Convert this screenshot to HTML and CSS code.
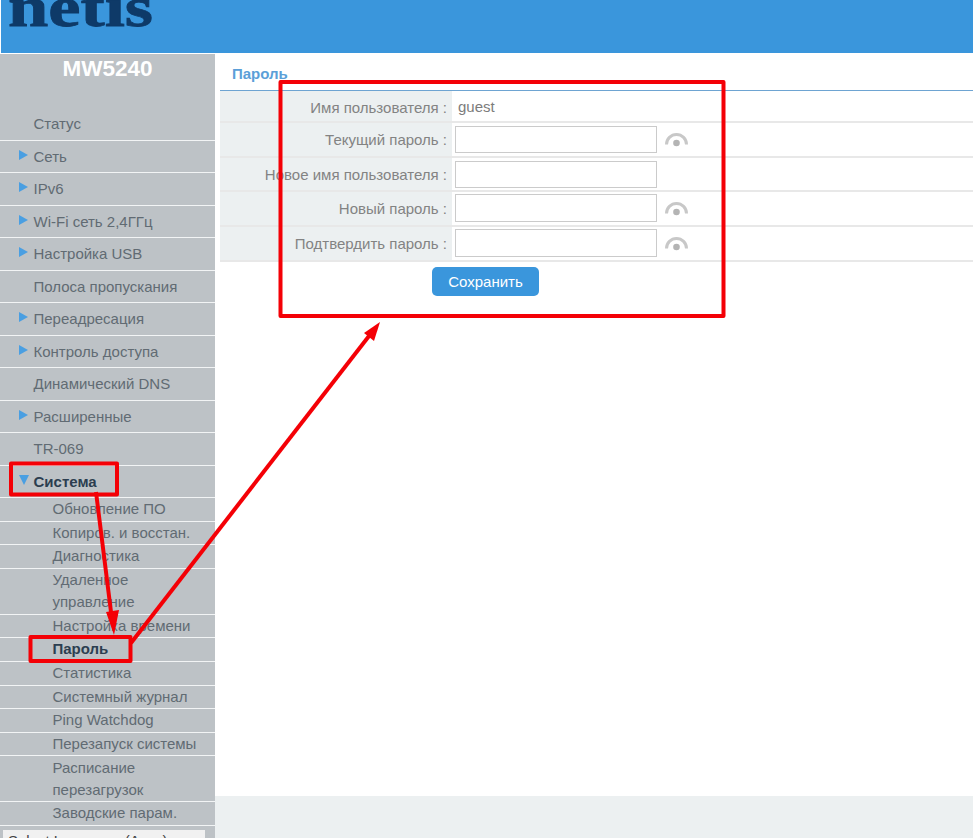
FILE: index.html
```html
<!DOCTYPE html>
<html lang="ru">
<head>
<meta charset="utf-8">
<title>netis MW5240</title>
<link rel="stylesheet" href="styles.css">
</head>
<body>
<div class="page">
  <header class="top"><span class="logo">netis</span></header>
  <div class="body">
    <nav class="side">
      <div class="model">MW5240</div>
      <div class="item">Статус</div>
      <div class="item arrow">Сеть</div>
      <div class="item arrow">IPv6</div>
      <div class="item arrow">Wi-Fi сеть 2,4ГГц</div>
      <div class="item arrow">Настройка USB</div>
      <div class="item">Полоса пропускания</div>
      <div class="item arrow">Переадресация</div>
      <div class="item arrow">Контроль доступа</div>
      <div class="item">Динамический DNS</div>
      <div class="item arrow">Расширенные</div>
      <div class="item">TR-069</div>
      <div class="item arrow open">Система</div>
      <div class="sub">Обновление ПО</div>
      <div class="sub">Копиров. и восстан.</div>
      <div class="sub">Диагностика</div>
      <div class="sub double">Удаленное управление</div>
      <div class="sub">Настройка времени</div>
      <div class="sub current">Пароль</div>
      <div class="sub">Статистика</div>
      <div class="sub">Системный журнал</div>
      <div class="sub">Ping Watchdog</div>
      <div class="sub">Перезапуск системы</div>
      <div class="sub double">Расписание перезагрузок</div>
      <div class="sub">Заводские парам.</div>
      <div class="lang">Select Language (Авто)</div>
    </nav>
    <main class="main">
      <section class="content">
        <h1 class="title">Пароль</h1>
        <div class="form">
          <div class="row r1"><div class="label">Имя пользователя :</div><div class="value">guest</div></div>
          <div class="row r2"><div class="label">Текущий пароль :</div><div class="value"><input class="field" type="text"><svg class="eye" viewBox="0 0 23 16"><path d="M1.500 13.500a10 10 0 0 1 20 0" fill="none" stroke="#c8c8c8" stroke-width="3"/><circle cx="11.500" cy="12" r="3.300" fill="#b4b4b4"/></svg></div></div>
          <div class="row r2"><div class="label">Новое имя пользователя :</div><div class="value"><input class="field" type="text"></div></div>
          <div class="row r3"><div class="label">Новый пароль :</div><div class="value"><input class="field tall" type="text"><svg class="eye" viewBox="0 0 23 16"><path d="M1.500 13.500a10 10 0 0 1 20 0" fill="none" stroke="#c8c8c8" stroke-width="3"/><circle cx="11.500" cy="12" r="3.300" fill="#b4b4b4"/></svg></div></div>
          <div class="row r3"><div class="label">Подтвердить пароль :</div><div class="value"><input class="field tall" type="text"><svg class="eye" viewBox="0 0 23 16"><path d="M1.500 13.500a10 10 0 0 1 20 0" fill="none" stroke="#c8c8c8" stroke-width="3"/><circle cx="11.500" cy="12" r="3.300" fill="#b4b4b4"/></svg></div></div>
        </div>
        <div class="actions"><button class="save" type="button">Сохранить</button></div>
      </section>
      <div class="band"></div>
    </main>
  </div>
  <svg class="notes" width="973" height="838" viewBox="0 0 973 838">
    <g fill="none" stroke="#f40006" stroke-width="4" stroke-linejoin="round">
      <rect x="280.500" y="82" width="443" height="234"/>
      <rect x="11" y="463.500" width="106" height="31"/>
      <rect x="30.500" y="637" width="100" height="24"/>
      <path d="M96 492 L112 620"/>
      <path d="M131 643 L369 336"/>
    </g>
    <path d="M114 635 L106 612 L119 610 Z" fill="#f40006"/>
    <path d="M380 322 L374 341 L364 333 Z" fill="#f40006"/>
  </svg>
</div>
</body>
</html>
```
FILE: styles.css
```css
* { box-sizing: border-box; }
html, body { margin: 0; padding: 0; background: #fff; }
body { font-family: "Liberation Sans", Arial, sans-serif; color: #666; }
.page { position: relative; width: 973px; height: 838px; overflow: hidden; }
.top { height: 53px; margin-left: 1px; background: #3a96dc; overflow: hidden; margin-bottom: 1px; }
.logo { display: block; margin: -22px 0 0 7px; font: bold 58px/58px "Liberation Serif", serif; color: #0e3a68; -webkit-text-stroke: 0.8px #0e3a68; transform: scaleX(1.25); transform-origin: 0 0; }
.body { display: flex; height: 784px; }
.side { width: 215px; flex: none; background: #bdc2c6; color: #616b73; font-size: 15px; }
.model { height: 54px; padding-top: 3px; text-align: center; color: #fff; font-size: 22.500px; font-weight: bold; line-height: 24px; }
.item { height: 32.500px; border-bottom: 1.500px solid #f2f4f5; padding: 5px 0 0 33.500px; line-height: 22px; position: relative; }
.arrow::before { content: ""; position: absolute; left: 19px; top: 9px; border-left: 9px solid #4a9fe2; border-top: 5px solid transparent; border-bottom: 5px solid transparent; }
.open { color: #2c3e50; font-weight: bold; }
.open::before { left: 19px; top: 9px; border-top: 10px solid #4a9fe2; border-left: 5px solid transparent; border-right: 5px solid transparent; border-bottom: 0; }
.sub { height: 23.600px; border-bottom: 1.500px solid #f2f4f5; padding-left: 52.500px; line-height: 22.600px; }
.double { height: 46px; padding-right: 40px; padding-top: 0.500px; line-height: 22px; }
.current { color: #2c3e50; font-weight: bold; }
.lang { margin: 4px 10px 0 3px; height: 40px; background: #f1f1f1; padding: 1px 0 0 5px; line-height: 20px; color: #444; }
.main { flex: 1; display: flex; flex-direction: column; }
.content { flex: 1; padding-left: 5px; }
.title { margin: 0; height: 37px; border-bottom: 1px solid #6ea4d2; padding: 11px 0 0 12px; font-size: 15px; line-height: 18px; font-weight: bold; color: #5b9fd8; }
.row { display: flex; border-bottom: 2px solid #e8e8e8; }
.r1 { height: 32px; }
.r2 { height: 34.500px; }
.r2 + .r2 .value { padding-top: 2px; }
.r3 { height: 35px; }
.r3 .value { padding-bottom: 2px; }
.label { width: 232px; padding: 0 5px 0 0; background: #ecf0f1; text-align: right; font-size: 15px; line-height: 33px; color: #838383; white-space: nowrap; }
.value { display: flex; align-items: center; padding-left: 3px; font-size: 15px; color: #7c7c7c; }
.r1 .value { padding-left: 6px; }
.field { width: 202px; height: 27px; margin: 0; border: 1px solid #cbcbcb; background: #fff; padding: 0 4px; }
.tall { height: 28px; }
.eye { width: 23px; height: 16px; margin: -1px 0 0 8px; }
.r3 .eye { margin-top: 1px; }
.actions { padding: 5px 0 0 212px; }
.save { width: 107px; height: 29px; border: 0; border-radius: 5px; background: #3a96dc; color: #fff; font: 15px "Liberation Sans", Arial, sans-serif; padding: 0; }
.band { height: 42px; background: #ecf0f1; }
.notes { position: absolute; left: 0; top: 0; pointer-events: none; }
```
